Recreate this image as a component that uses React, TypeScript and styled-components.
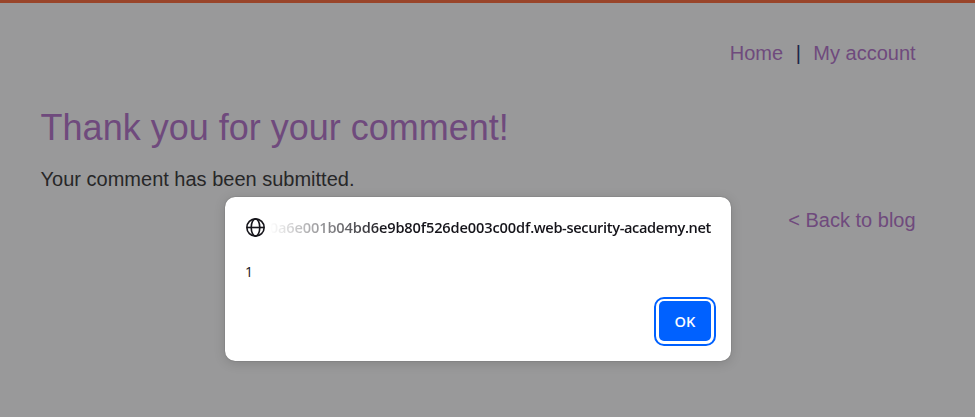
import React from 'react';
import styled, { createGlobalStyle } from 'styled-components';

const GlobalStyle = createGlobalStyle`
  * { box-sizing: border-box; }
  body { margin: 0; background: #99999a; }
`;

const Page = styled.div`
  height: 417px;
  overflow: hidden;
  border-top: 3px solid #99452a;
  background: #99999a;
  padding: 38px 59.4px 0 40.6px;
  font: 20px/24px 'Liberation Sans', Arial, sans-serif;
  color: #272728;
`;

const TopNav = styled.nav`
  display: flex;
  justify-content: flex-end;
  gap: 12.5px;
  color: #1c2749;
`;

const PageLink = styled.a`
  color: #6f4a7d;
  text-decoration: none;
`;

const Heading = styled.h1`
  margin: 42px 0 0;
  font-size: 36px;
  line-height: 42px;
  font-weight: 400;
  color: #6f4a7d;
`;

const Message = styled.p`
  margin: 18px 0 0;
`;

const BackRow = styled.div`
  display: flex;
  justify-content: flex-end;
  margin-top: 17px;
`;

const Dialog = styled.div`
  position: absolute;
  left: 225px;
  top: 197px;
  width: 506px;
  height: 164px;
  padding: 20px 15px 15px 21px;
  display: flex;
  flex-direction: column;
  border-radius: 10px;
  background: #fff;
  box-shadow: 0 0 1px rgba(0, 0, 0, 0.5), 0 2px 12px rgba(0, 0, 0, 0.15);
  font: 14.6px/20px 'Open Sans', 'Noto Sans', sans-serif;
  color: #15141a;
`;

const Origin = styled.div`
  display: flex;
  align-items: flex-start;
  justify-content: space-between;
  height: 22px;
  padding-right: 5px;
`;

const Globe = styled.svg`
  width: 19px;
  height: 19px;
  flex: none;
  margin-top: 1px;
`;

const Host = styled.div`
  width: 441px;
  display: flex;
  justify-content: flex-end;
  overflow: hidden;
  white-space: nowrap;
  font-weight: 600;
  mask-image: linear-gradient(to right, transparent, #000 115px);
`;

const HostPart = styled.span<{ $spacing: number }>`
  letter-spacing: ${({ $spacing }) => $spacing}px;
`;

const AlertText = styled.div`
  margin: 23px 0 0 -1px;
  font-size: 14px;
`;

const Actions = styled.div`
  display: flex;
  justify-content: flex-end;
  margin-top: 15px;
`;

const FocusRing = styled.div`
  width: 62px;
  height: 49px;
  padding: 2px 3px 3px;
  border: 2px solid #0061ff;
  border-radius: 10px;
`;

const OkButton = styled.button`
  display: block;
  width: 52px;
  height: 40px;
  padding: 0;
  border: 0;
  border-radius: 5px;
  background: #0061ff;
  color: #fbfbfe;
  font: 600 14.6px/20px 'Open Sans', 'Noto Sans', sans-serif;
`;

export default function App() {
  return (
    <>
      <GlobalStyle />
      <Page>
        <TopNav>
          <PageLink>Home</PageLink>
          <span>|</span>
          <PageLink>My account</PageLink>
        </TopNav>
        <Heading>Thank you for your comment!</Heading>
        <Message>Your comment has been submitted.</Message>
        <BackRow>
          <PageLink>&lt; Back to blog</PageLink>
        </BackRow>
      </Page>
      <Dialog role="alertdialog">
        <Origin>
          <Globe viewBox="0 0 20 20" fill="none" stroke="#15141a" strokeWidth="1.7">
            <circle cx="10" cy="10" r="9.1" />
            <ellipse cx="10" cy="10" rx="4.5" ry="9.1" />
            <path d="M1 10h18" />
          </Globe>
          <Host>
            <HostPart $spacing={-0.13}>0a6e001b04bd6e9b80f526de003c00df</HostPart>
            <HostPart $spacing={-0.35}>.web-security-academy.net</HostPart>
          </Host>
        </Origin>
        <AlertText>1</AlertText>
        <Actions>
          <FocusRing>
            <OkButton>OK</OkButton>
          </FocusRing>
        </Actions>
      </Dialog>
    </>
  );
}
